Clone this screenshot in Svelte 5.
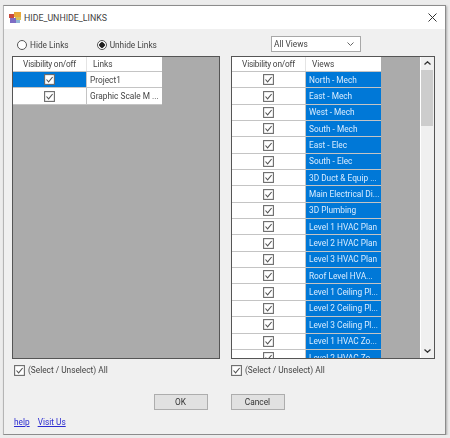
<script>
	const links = [
		{ name: 'Project1', selected: true },
		{ name: 'Graphic Scale M ...', selected: false }
	];
	const views = [
		'North - Mech', 'East - Mech', 'West - Mech', 'South - Mech', 'East - Elec', 'South - Elec',
		'3D Duct & Equip ...', 'Main Electrical Di...', '3D Plumbing', 'Level 1 HVAC Plan', 'Level 2 HVAC Plan',
		'Level 3 HVAC Plan', 'Roof Level HVA...', 'Level 1 Ceiling Pl...', 'Level 2 Ceiling Pl...',
		'Level 3 Ceiling Pl...', 'Level 1 HVAC Zo...', 'Level 2 HVAC Zo...'
	];
</script>

{#snippet check()}
	<svg class="check" width="11" height="11" viewBox="0 0 11 11">
		<rect x="0.6" y="0.6" width="9.8" height="9.8" fill="#fff" stroke="#6a6a6a" stroke-width="1.1" />
		<path d="M2.5 5.5 L4.6 7.8 L8.6 3" fill="none" stroke="#555" stroke-width="1.1" />
	</svg>
{/snippet}

<div class="dialog">
	<header class="titlebar">
		<svg class="appicon" width="12" height="11" viewBox="0 0 12 11">
			<rect x="0" y="2" width="5" height="4" fill="#c8483c" />
			<rect x="5" y="0" width="7" height="5" fill="#e8a93a" />
			<rect x="6" y="5" width="6" height="3" fill="#d9c25a" />
			<rect x="1" y="6" width="6" height="5" fill="#7d6cc4" />
			<rect x="7" y="8" width="4" height="3" fill="#8fb7d8" />
		</svg>
		<span class="title">HIDE_UNHIDE_LINKS</span>
		<svg class="close" width="9" height="9" viewBox="0 0 9 9">
			<path d="M0.5 0.5 L8.5 8.5 M8.5 0.5 L0.5 8.5" stroke="#333" stroke-width="1" fill="none" />
		</svg>
	</header>

	<div class="body">
		<div class="columns">
			<section class="col">
				<div class="controls radios">
					<label class="radio"><span class="dot"></span>Hide Links</label>
					<label class="radio"><span class="dot on"></span>Unhide Links</label>
				</div>
				<div class="grid">
					<div class="table">
						<div class="row head">
							<div class="cell c1">Visibility on/off</div>
							<div class="cell c2">Links</div>
						</div>
						{#each links as link}
							<div class="row">
								<div class="cell c1 mid" class:sel={link.selected}>{@render check()}</div>
								<div class="cell c2">{link.name}</div>
							</div>
						{/each}
					</div>
				</div>
				<label class="all">{@render check()}(Select / Unselect) All</label>
			</section>

			<section class="col right">
				<div class="controls">
					<div class="combo">
						<span>All Views</span>
						<svg width="7" height="4" viewBox="0 0 7 4"><path d="M0.5 0.5 L3.5 3.5 L6.5 0.5" fill="none" stroke="#666" /></svg>
					</div>
				</div>
				<div class="grid">
					<div class="table">
						<div class="row head">
							<div class="cell c1">Visibility on/off</div>
							<div class="cell c2">Views</div>
						</div>
						{#each views as view}
							<div class="row">
								<div class="cell c1 mid">{@render check()}</div>
								<div class="cell c2 sel">{view}</div>
							</div>
						{/each}
					</div>
					<div class="scrollbar">
						<svg class="arrow" width="7" height="4" viewBox="0 0 7 4"><path d="M0.5 3.5 L3.5 0.8 L6.5 3.5" fill="none" stroke="#333" stroke-width="1.3" /></svg>
						<div class="track"><div class="thumb"></div></div>
						<svg class="arrow" width="7" height="4" viewBox="0 0 7 4"><path d="M0.5 0.5 L3.5 3.2 L6.5 0.5" fill="none" stroke="#333" stroke-width="1.3" /></svg>
					</div>
				</div>
				<label class="all">{@render check()}(Select / Unselect) All</label>
			</section>
		</div>

		<div class="buttons">
			<button>OK</button>
			<button>Cancel</button>
		</div>

		<div class="links">
			<a href="#help">help</a>
			<a href="#visit">Visit Us</a>
		</div>
	</div>
</div>

<style>
	:global(body) {
		margin: 0;
		background: #ececec;
	}

	.dialog {
		box-sizing: border-box;
		width: 443px;
		height: 430px;
		margin: 5px 0 0 3px;
		border: 1px solid #8c8c8c;
		border-left-color: #b5b5b5;
		background: #f0f0f0;
		font-family: Roboto, "Liberation Sans", sans-serif;
		font-size: 8.3px;
		color: #444;
		box-shadow: 1px 1px 2px #aaa;
		filter: blur(0.3px);
	}

	.titlebar {
		display: flex;
		align-items: center;
		height: 23px;
		padding: 0 8px 0 5px;
		background: #fff;
	}

	.appicon {
		margin-right: 3px;
	}

	.title {
		flex: 1;
		font-size: 8.8px;
	}

	.body {
		padding: 0 10px 0 8px;
	}

	.columns {
		display: flex;
		gap: 11px;
	}

	.col {
		width: 208px;
	}

	.right {
		width: 204px;
	}

	.controls {
		display: flex;
		align-items: center;
		height: 27px;
	}

	.radios {
		gap: 28px;
		padding: 4px 0 0 5px;
		box-sizing: border-box;
	}

	.radio {
		display: flex;
		align-items: center;
		gap: 3px;
	}

	.dot {
		box-sizing: border-box;
		width: 10px;
		height: 10px;
		border: 1px solid #555;
		border-radius: 50%;
		background: #fff;
	}

	.dot.on {
		background: radial-gradient(circle, #222 0 2.5px, #fff 3px);
	}

	.combo {
		box-sizing: border-box;
		display: flex;
		align-items: center;
		justify-content: space-between;
		width: 90px;
		height: 16px;
		margin: 3px 0 0 40px;
		padding: 0 6px 0 2px;
		background: #fff;
		border: 1px solid #a8a8a8;
	}

	.grid {
		box-sizing: border-box;
		display: flex;
		justify-content: space-between;
		height: 303px;
		overflow: hidden;
		background: #ababab;
		border: 1px solid #555;
	}

	.table {
		width: 149px;
	}

	.row {
		display: flex;
		height: 16.35px;
		background: #fff;
		border-bottom: 1px solid #c4c4c4;
		box-sizing: border-box;
	}

	.row.head {
		height: 15px;
	}

	.cell {
		box-sizing: border-box;
		display: flex;
		align-items: center;
		overflow: hidden;
		white-space: nowrap;
	}

	.c1 {
		width: 74px;
		border-right: 1px solid #c4c4c4;
	}

	.head .c1 {
		justify-content: center;
		border-right-color: #e4e4e4;
		letter-spacing: -0.2px;
	}

	.c2 {
		width: 75px;
		padding-left: 3px;
	}

	.head .c2 {
		padding-left: 6px;
	}

	.mid {
		justify-content: center;
	}

	.sel {
		background: #0078d7;
		color: #d8ecff;
	}

	.scrollbar {
		display: flex;
		flex-direction: column;
		align-items: center;
		width: 13px;
		background: #f0f0f0;
		border-left: 1px solid #fff;
	}

	.arrow {
		flex: none;
		margin: 4px 0 5px;
	}

	.track {
		flex: 1;
		align-self: stretch;
		padding: 0 1px 0 0;
	}

	.thumb {
		height: 56px;
		background: #cdcdcd;
	}

	.all {
		display: flex;
		align-items: center;
		gap: 3px;
		height: 22px;
		padding-left: 2px;
	}

	.right .all {
		padding-left: 0;
	}

	.buttons {
		display: flex;
		justify-content: center;
		gap: 23px;
		margin-top: 13px;
		padding-right: 9px;
	}

	button {
		width: 54px;
		height: 16px;
		padding: 0;
		background: #e1e1e1;
		border: 1px solid #adadad;
		font: inherit;
		color: #333;
	}

	.links {
		display: flex;
		gap: 8px;
		margin-top: 7px;
		padding-left: 2px;
	}

	a {
		color: #2a2ad0;
	}
</style>
